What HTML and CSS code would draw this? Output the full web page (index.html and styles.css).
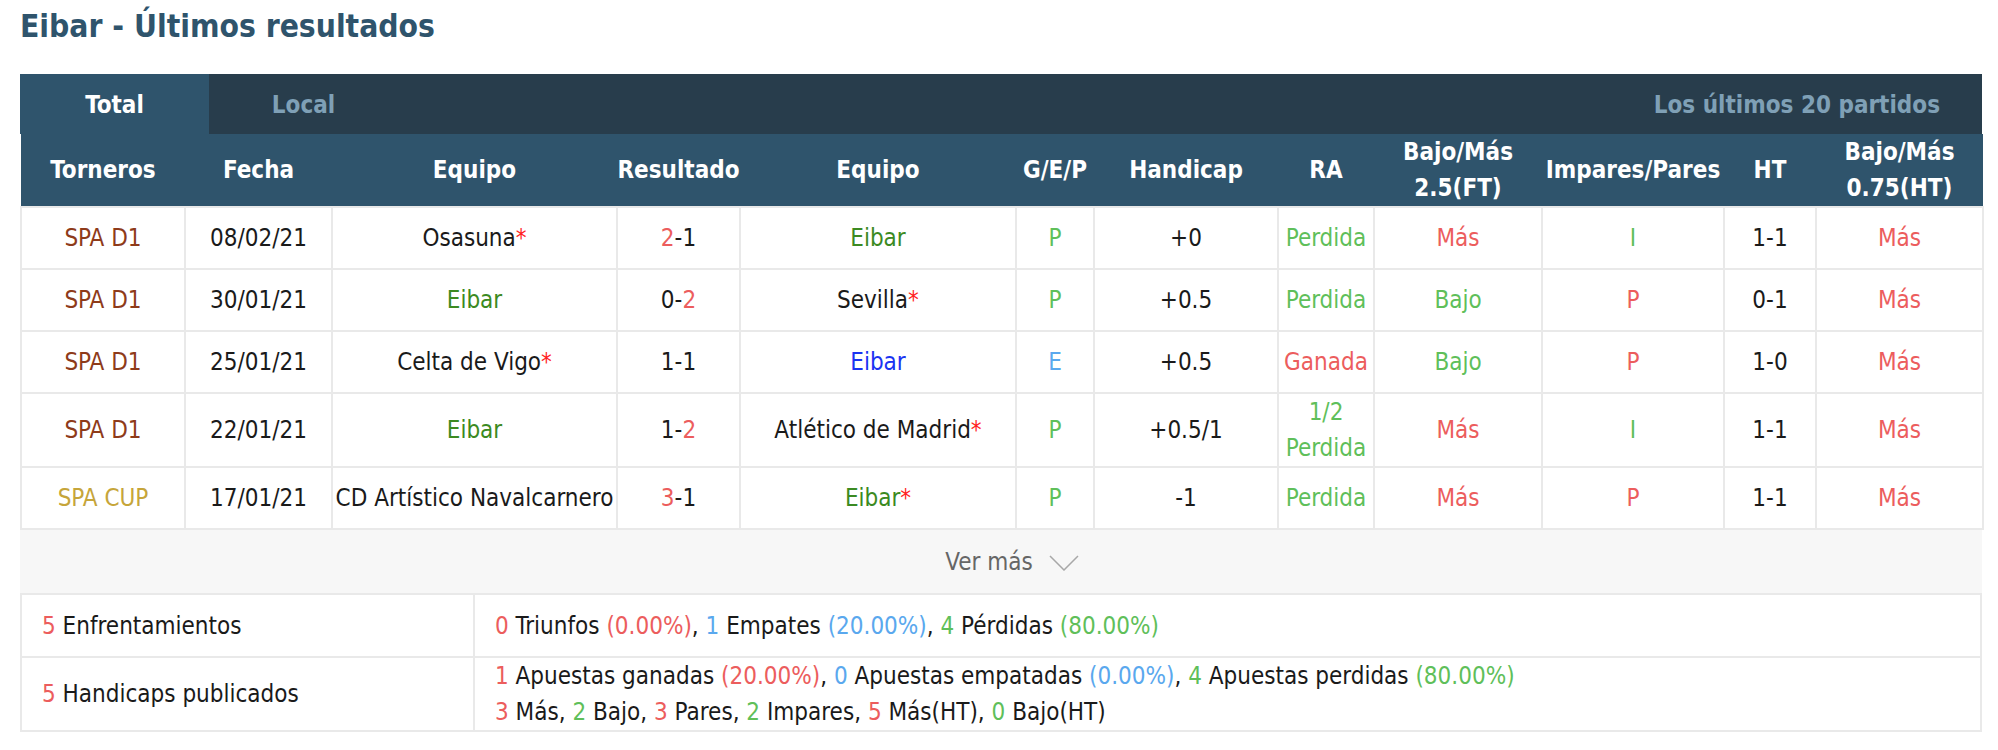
FILE: index.html
```html
<!DOCTYPE html>
<html lang="es">
<head>
<meta charset="utf-8">
<title>Eibar - Últimos resultados</title>
<link rel="stylesheet" href="styles.css">
</head>
<body>
<div class="page">
  <h1 class="title">Eibar - Últimos resultados</h1>
  <div class="panel">
    <div class="tabs">
      <div class="tab active">Total</div>
      <div class="tab">Local</div>
      <div class="tabs-info">Los últimos 20 partidos</div>
    </div>
    <table class="results">
      <colgroup>
        <col class="w-torneo"><col class="w-fecha"><col class="w-equipo1"><col class="w-res">
        <col class="w-equipo2"><col class="w-gep"><col class="w-hcp"><col class="w-ra">
        <col class="w-bm"><col class="w-ip"><col class="w-ht"><col class="w-bm2">
      </colgroup>
      <thead>
        <tr>
          <th>Torneros</th><th>Fecha</th><th>Equipo</th><th>Resultado</th><th>Equipo</th>
          <th>G/E/P</th><th>Handicap</th><th>RA</th><th>Bajo/Más<br>2.5(FT)</th>
          <th>Impares/Pares</th><th>HT</th><th>Bajo/Más<br>0.75(HT)</th>
        </tr>
      </thead>
      <tbody>
        <tr>
          <td class="brown">SPA D1</td><td>08/02/21</td><td>Osasuna<span class="star">*</span></td>
          <td><span class="red">2</span>-1</td><td class="dgreen">Eibar</td><td class="green">P</td>
          <td>+0</td><td class="green">Perdida</td><td class="red">Más</td><td class="green">I</td>
          <td>1-1</td><td class="red">Más</td>
        </tr>
        <tr>
          <td class="brown">SPA D1</td><td>30/01/21</td><td class="dgreen">Eibar</td>
          <td>0-<span class="red">2</span></td><td>Sevilla<span class="star">*</span></td><td class="green">P</td>
          <td>+0.5</td><td class="green">Perdida</td><td class="green">Bajo</td><td class="red">P</td>
          <td>0-1</td><td class="red">Más</td>
        </tr>
        <tr>
          <td class="brown">SPA D1</td><td>25/01/21</td><td>Celta de Vigo<span class="star">*</span></td>
          <td>1-1</td><td class="blue">Eibar</td><td class="lblue">E</td>
          <td>+0.5</td><td class="red">Ganada</td><td class="green">Bajo</td><td class="red">P</td>
          <td>1-0</td><td class="red">Más</td>
        </tr>
        <tr>
          <td class="brown">SPA D1</td><td>22/01/21</td><td class="dgreen">Eibar</td>
          <td>1-<span class="red">2</span></td><td>Atlético de Madrid<span class="star">*</span></td><td class="green">P</td>
          <td>+0.5/1</td><td class="green">1/2<br>Perdida</td><td class="red">Más</td><td class="green">I</td>
          <td>1-1</td><td class="red">Más</td>
        </tr>
        <tr>
          <td class="gold">SPA CUP</td><td>17/01/21</td><td>CD Artístico Navalcarnero</td>
          <td><span class="red">3</span>-1</td><td class="dgreen">Eibar<span class="star">*</span></td><td class="green">P</td>
          <td>-1</td><td class="green">Perdida</td><td class="red">Más</td><td class="red">P</td>
          <td>1-1</td><td class="red">Más</td>
        </tr>
      </tbody>
    </table>
    <div class="more">
      <span>Ver más</span>
      <svg class="chev" width="30" height="16" viewBox="0 0 30 16"><polyline points="1,1 15,15 29,1" fill="none" stroke="#a8a8a8" stroke-width="1.5"/></svg>
    </div>
    <table class="summary">
      <colgroup><col class="w-label"><col></colgroup>
      <tr class="s1">
        <td><span class="red">5</span> Enfrentamientos</td>
        <td><span class="red">0</span> Triunfos <span class="red">(0.00%)</span>, <span class="lblue">1</span> Empates <span class="lblue">(20.00%)</span>, <span class="green">4</span> Pérdidas <span class="green">(80.00%)</span></td>
      </tr>
      <tr>
        <td><span class="red">5</span> Handicaps publicados</td>
        <td><span class="red">1</span> Apuestas ganadas <span class="red">(20.00%)</span>, <span class="lblue">0</span> Apuestas empatadas <span class="lblue">(0.00%)</span>, <span class="green">4</span> Apuestas perdidas <span class="green">(80.00%)</span><br><span class="red">3</span> Más, <span class="green">2</span> Bajo, <span class="red">3</span> Pares, <span class="green">2</span> Impares, <span class="red">5</span> Más(HT), <span class="green">0</span> Bajo(HT)</td>
      </tr>
    </table>
  </div>
</div>
</body>
</html>
```

FILE: styles.css
```css
html, body {
  margin: 0;
  padding: 0;
  background: #fff;
}
body {
  font-family: "DejaVu Sans Condensed", "DejaVu Sans", sans-serif;
  font-stretch: condensed;
  font-size: 24px;
  color: #1a1a1a;
}
.page {
  padding: 8px 16px 0 20px;
}
.title {
  margin: 0 0 30px 0;
  font-size: 31.5px;
  line-height: 36px;
  font-weight: bold;
  color: #2f546c;
}
.panel {
  width: 1962px;
}
.tabs {
  display: flex;
  height: 57px;
  padding-top: 3px;
  background: #283d4c;
  line-height: 57px;
  font-weight: bold;
  color: #7fa0b6;
}
.tab {
  width: 189px;
  margin-top: -3px;
  padding-top: 3px;
  text-align: center;
}
.tab.active {
  background: #2f546c;
  color: #fff;
}
.tabs-info {
  margin-left: auto;
  padding-right: 42px;
}
.results, .summary {
  width: 1962px;
  border-collapse: collapse;
  table-layout: fixed;
}
.results th {
  background: #2f546c;
  color: #fff;
  font-weight: bold;
  height: 72px;
  line-height: 36px;
  padding: 0;
  text-align: center;
  vertical-align: middle;
  white-space: nowrap;
}
.results td {
  border: 2px solid #e9e9e9;
  height: 60px;
  padding: 0 2px;
  line-height: 36px;
  text-align: center;
  vertical-align: middle;
  white-space: nowrap;
}
.w-torneo { width: 164px; }
.w-fecha { width: 147px; }
.w-equipo1 { width: 285px; }
.w-res { width: 123px; }
.w-equipo2 { width: 276px; }
.w-gep { width: 78px; }
.w-hcp { width: 184px; }
.w-ra { width: 96px; }
.w-bm { width: 168px; }
.w-ip { width: 182px; }
.w-ht { width: 92px; }
.w-bm2 { width: 167px; }
.w-label { width: 453px; }

.more {
  display: flex;
  align-items: center;
  justify-content: center;
  height: 63px;
  padding-left: 22px;
  background: #f7f7f7;
  color: #666;
}
.chev {
  margin-left: 16px;
  margin-top: 2px;
}
.summary td {
  border: 2px solid #e9e9e9;
  padding: 0 0 0 20px;
  line-height: 36px;
  text-align: left;
  vertical-align: middle;
}
.summary .s1 td {
  height: 61px;
}

.red { color: #ec5d5d; }
.green { color: #5fbf5a; }
.dgreen { color: #3b8a22; }
.blue { color: #1a33f2; }
.lblue { color: #5aa8ee; }
.brown { color: #8e3b1a; }
.gold { color: #c6a53a; }
.star { color: #f22; }
```
